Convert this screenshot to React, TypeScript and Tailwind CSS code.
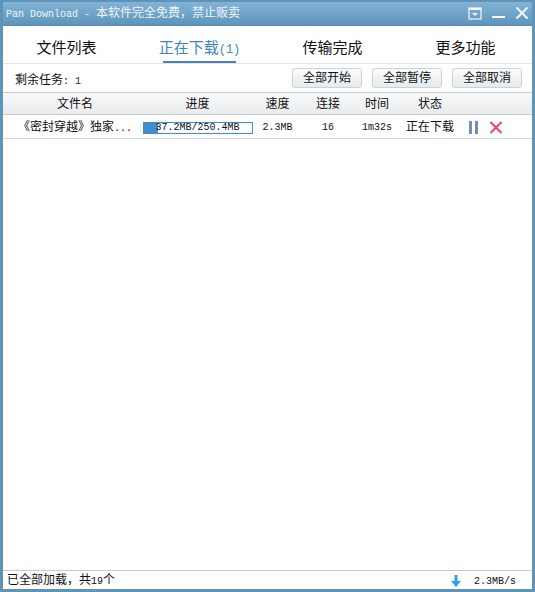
const mono = "font-['Liberation_Mono','Noto_Sans_CJK_SC',monospace]";

function TitleButtons() {
  return (
    <div className="flex items-center gap-[9px] pr-[6px]">
      <svg className="mr-[1px]" width="14" height="14" viewBox="0 0 14 14">
        <rect x="1" y="2" width="12" height="11" fill="none" stroke="#f2f7fb" strokeWidth="1.2" />
        <rect x="1" y="2" width="12" height="2" fill="#f2f7fb" />
        <path d="M4 7h6L7 10z" fill="#f2f7fb" />
      </svg>
      <svg width="14" height="14" viewBox="0 0 14 14">
        <rect x="0" y="10" width="13" height="2" fill="#f2f7fb" />
      </svg>
      <svg width="14" height="14" viewBox="0 0 14 14">
        <path d="M1.5 1.5l11 11M12.5 1.5l-11 11" stroke="#f2f7fb" strokeWidth="2" fill="none" />
      </svg>
    </div>
  );
}

function Tab({ label, count, active }: { label: string; count?: string; active?: boolean }) {
  return (
    <div className={"flex flex-col items-center pt-[14px] " + (active ? "text-[#3c85c4]" : "text-[#111111]")}>
      <span className="whitespace-nowrap text-[15px] leading-[20px]">
        {label}
        {count && <span className="text-[12px]">{count}</span>}
      </span>
      <span className={"mt-[1px] h-[2px] w-[73px] " + (active ? "bg-[#4a80c4]" : "bg-transparent")} />
    </div>
  );
}

function ActionButton({ label }: { label: string }) {
  return (
    <button className="flex h-[20px] w-[70px] items-center justify-center rounded-[3px] border border-[#c9d3da] bg-gradient-to-b from-[#fbfcfd] to-[#e6ebef] pt-[2px] text-[12px] text-[#111111]">
      {label}
    </button>
  );
}

export default function App() {
  return (
    <div className={mono + " flex h-[592px] w-[535px] flex-col overflow-hidden border-[3px] border-t-[2px] border-[#5f93b8] bg-white text-[12px] text-[#111111]"}>
      <div className="-mx-[3px] -mt-[2px] flex h-[26px] shrink-0 items-center justify-between border-b border-[#5a8cb0] bg-gradient-to-b from-[#86b6d8] to-[#5e95bb] pl-[6px]">
        <span className="whitespace-nowrap pt-[2px] text-[12px] text-[#eef5fa]">
          <span className="text-[10px]">Pan Download - </span>本软件完全免费，禁止贩卖
        </span>
        <TitleButtons />
      </div>

      <div className="-ml-[3px] grid h-[38px] shrink-0 grid-cols-4 border-b border-[#e3e6e8]">
        <Tab label="文件列表" />
        <Tab label="正在下载" count="(1)" active />
        <Tab label="传输完成" />
        <Tab label="更多功能" />
      </div>

      <div className="flex h-[28px] shrink-0 items-center justify-between pl-[12px] pr-[10px]">
        <span className="pt-[6px]">剩余任务<span className="text-[10px]">: </span><span className="text-[10px] text-[#1a1a80]">1</span></span>
        <div className="flex gap-[10px]">
          <ActionButton label="全部开始" />
          <ActionButton label="全部暂停" />
          <ActionButton label="全部取消" />
        </div>
      </div>

      <div className="flex h-[23px] shrink-0 items-center border-y border-[#c9cdd0] bg-gradient-to-b from-[#fafafa] to-[#e9ebed] pt-[2px] text-center">
        <div className="w-[137px] pl-[7px]">文件名</div>
        <div className="w-[115px]">进度</div>
        <div className="w-[45px]">速度</div>
        <div className="w-[56px]">连接</div>
        <div className="w-[42px]">时间</div>
        <div className="w-[64px]">状态</div>
      </div>

      <div className="flex h-[24px] shrink-0 items-center border-b border-[#d5d8da] pt-[2px] text-center">
        <div className="w-[137px] whitespace-nowrap pl-[7px]">《密封穿越》独家<span className="text-[10px]">...</span></div>
        <div className="flex w-[115px] justify-center">
          <div className="relative h-[12px] w-[110px] border border-[#3f8fd0] text-[10px] leading-[10px]">
            <div className="h-full w-[14px] bg-[#3f8fd0]" />
            <span className="absolute inset-0 whitespace-nowrap text-center text-[#111111]">37.2MB/250.4MB</span>
          </div>
        </div>
        <div className="w-[45px] text-[10px]">2.3MB</div>
        <div className="w-[56px] text-[10px]">16</div>
        <div className="w-[42px] text-[10px]">1m32s</div>
        <div className="w-[64px] whitespace-nowrap">正在下载</div>
        <div className="ml-[7px] flex items-center gap-[11px]">
          <svg width="10" height="13" viewBox="0 0 10 13">
            <rect x="0" y="0" width="3" height="13" fill="#6f8fb8" />
            <rect x="6" y="0" width="3" height="13" fill="#6f8fb8" />
          </svg>
          <svg width="12" height="13" viewBox="0 0 12 13">
            <path d="M0.5 1l11 11M11.5 1l-11 11" stroke="#dc4a72" strokeWidth="2" fill="none" />
          </svg>
        </div>
      </div>

      <div className="flex-1" />

      <div className="flex h-[19px] shrink-0 items-center justify-between border-t border-[#c9cdd0] pl-[4px] pr-[16px] pt-[2px]">
        <span className="text-[12px]">已全部加载，共<span className="text-[10px]">19</span>个</span>
        <div className="flex items-center gap-[13px]">
          <svg width="10" height="12" viewBox="0 0 10 12">
            <path d="M3.5 0h3v6H10L5 12 0 6h3.5z" fill="#2f9fe8" />
          </svg>
          <span className="text-[10px]">2.3MB/s</span>
        </div>
      </div>
    </div>
  );
}
